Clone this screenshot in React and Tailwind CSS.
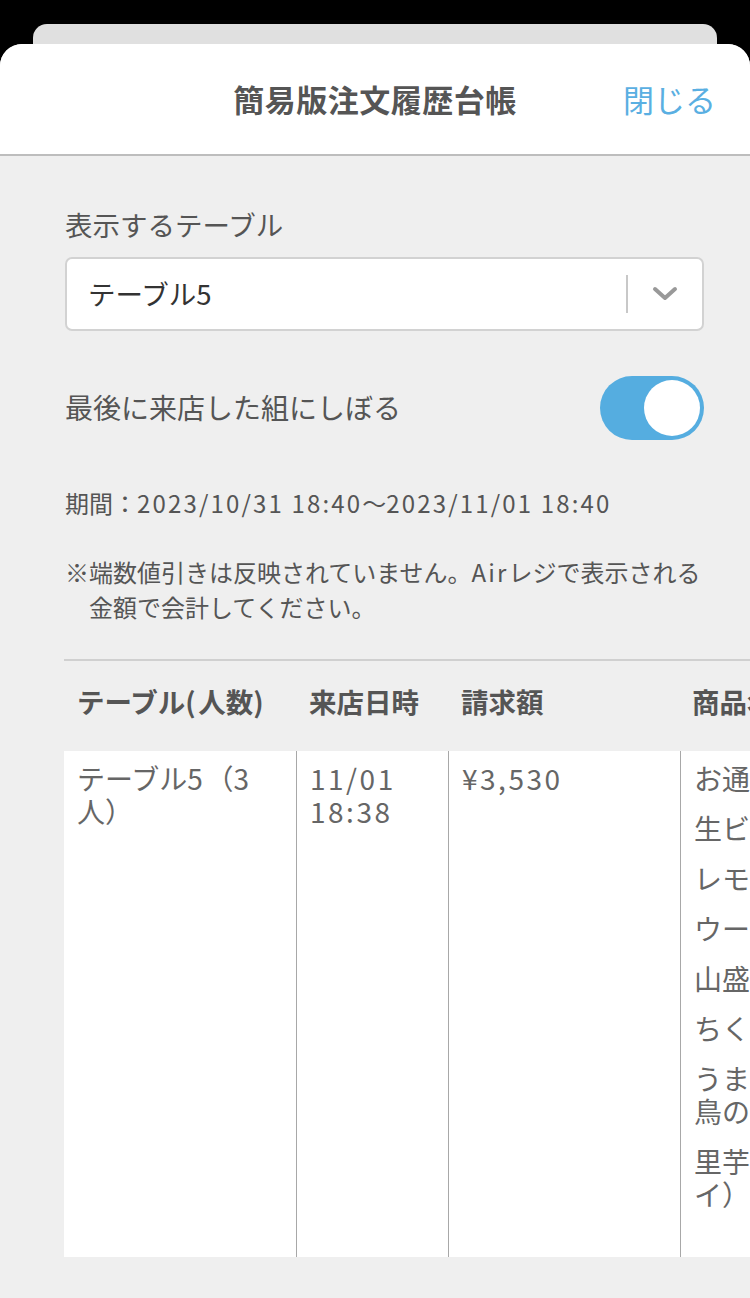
import React from "react";

const font = { fontFamily: '"Noto Sans CJK JP", "Noto Sans", sans-serif' };

const items = [
  ["お通し"],
  ["生ビール（中）"],
  ["レモンサワー"],
  ["ウーロン茶"],
  ["山盛りポテト"],
  ["ちくわ磯辺揚げ"],
  ["うま辛ジューシー", "鳥の唐揚げ"],
  ["里芋の唐揚げ（スパ", "イ）"],
];

function L({ children }) {
  return <span className="tracking-[0.09em]">{children}</span>;
}

export default function App() {
  return (
    <div className="min-h-[1298px] w-[750px] overflow-hidden bg-black" style={font}>
      <div className="pt-[24px]">
        <div className="mx-[33px] h-[20px] rounded-t-[14px] bg-[#e0e0e0]" />
        <div className="rounded-t-[22px] bg-[#efefef] min-h-[1254px]">
          {/* header */}
          <div className="relative flex h-[112px] items-center justify-center rounded-t-[22px] border-b-2 border-[#bdbdbd] bg-white">
            <div className="text-[31px] font-bold tracking-[0.5px] text-[#555555]">簡易版注文履歴台帳</div>
            <div className="absolute right-[34px] top-[32px] text-[31px] text-[#5aafe2]">閉じる</div>
          </div>

          <div className="pl-[65px] pr-[46px] pt-[48px]">
            <div className="text-[27.5px] leading-[40px] text-[#555555]">表示するテーブル</div>
            <div className="mt-[13px] flex h-[74px] items-center rounded-[7px] border-2 border-[#d2d2d2] bg-white pl-[21px]">
              <div className="flex-1 text-[27.5px] text-[#333333]">テーブル<L>5</L></div>
              <div className="h-[38px] w-[2px] bg-[#c8c8c8]" />
              <div className="flex w-[74px] items-center justify-center">
                <svg width="26" height="16" viewBox="0 0 26 16">
                  <path d="M3 3 L13 12 L23 3" fill="none" stroke="#999999" strokeWidth="4" strokeLinecap="round" strokeLinejoin="round" />
                </svg>
              </div>
            </div>

            <div className="mt-[45px] flex items-center justify-between">
              <div className="-mt-[3px] text-[28px] text-[#555555]">最後に来店した組にしぼる</div>
              <div className="flex h-[64px] w-[104px] items-center justify-end rounded-full bg-[#55ade0] pr-[4px]">
                <div className="h-[56px] w-[56px] rounded-full bg-white" />
              </div>
            </div>

            <div className="mt-[46px] text-[24px] leading-[34px] text-[#555555]">
              期間：<L>2023/10/31 18:40</L>〜<L>2023/11/01 18:40</L>
            </div>

            <div className="mt-[34px] pl-[24px] -indent-[24px] text-[24px] leading-[35px] text-[#555555]">
              ※端数値引きは反映されていません。<L>Air</L>レジで表示される金額で会計してください。
            </div>
          </div>

          <div className="ml-[64px] mt-[35px] border-t-2 border-[#d0d0d0]">
            <div className="flex h-[90px] w-[900px] items-center pb-[8px] text-[27.5px] font-bold text-[#555555]">
              <div className="w-[232px] pl-[13px]">テーブル<L>(</L>人数<L>)</L></div>
              <div className="w-[152px] pl-[13px]">来店日時</div>
              <div className="w-[232px] pl-[13px]">請求額</div>
              <div className="flex-1 pl-[12px]">商品名</div>
            </div>
            <div className="flex w-[900px] bg-white text-[28px] leading-[33px] text-[#666666]">
              <div className="w-[232px] px-[13px] pt-[11px] pb-[46px]">テーブル<L>5</L>（<L>3</L><br />人）</div>
              <div className="w-[152px] border-l border-[#a8a8a8] px-[13px] pt-[11px]"><L>11/01</L><br /><L>18:38</L></div>
              <div className="w-[232px] border-l border-[#a8a8a8] px-[13px] pt-[11px]"><L>¥3,530</L></div>
              <div className="flex-1 border-l border-[#a8a8a8] pl-[13px] pt-[11px] pb-[46px]">
                {items.map((lines, i) => (
                  <div key={i} className={i < items.length - 1 ? "mb-[17px]" : ""}>
                    {lines.map((l, j) => (
                      <div key={j} className="whitespace-nowrap">{l}</div>
                    ))}
                  </div>
                ))}
              </div>
            </div>
          </div>
        </div>
      </div>
    </div>
  );
}
